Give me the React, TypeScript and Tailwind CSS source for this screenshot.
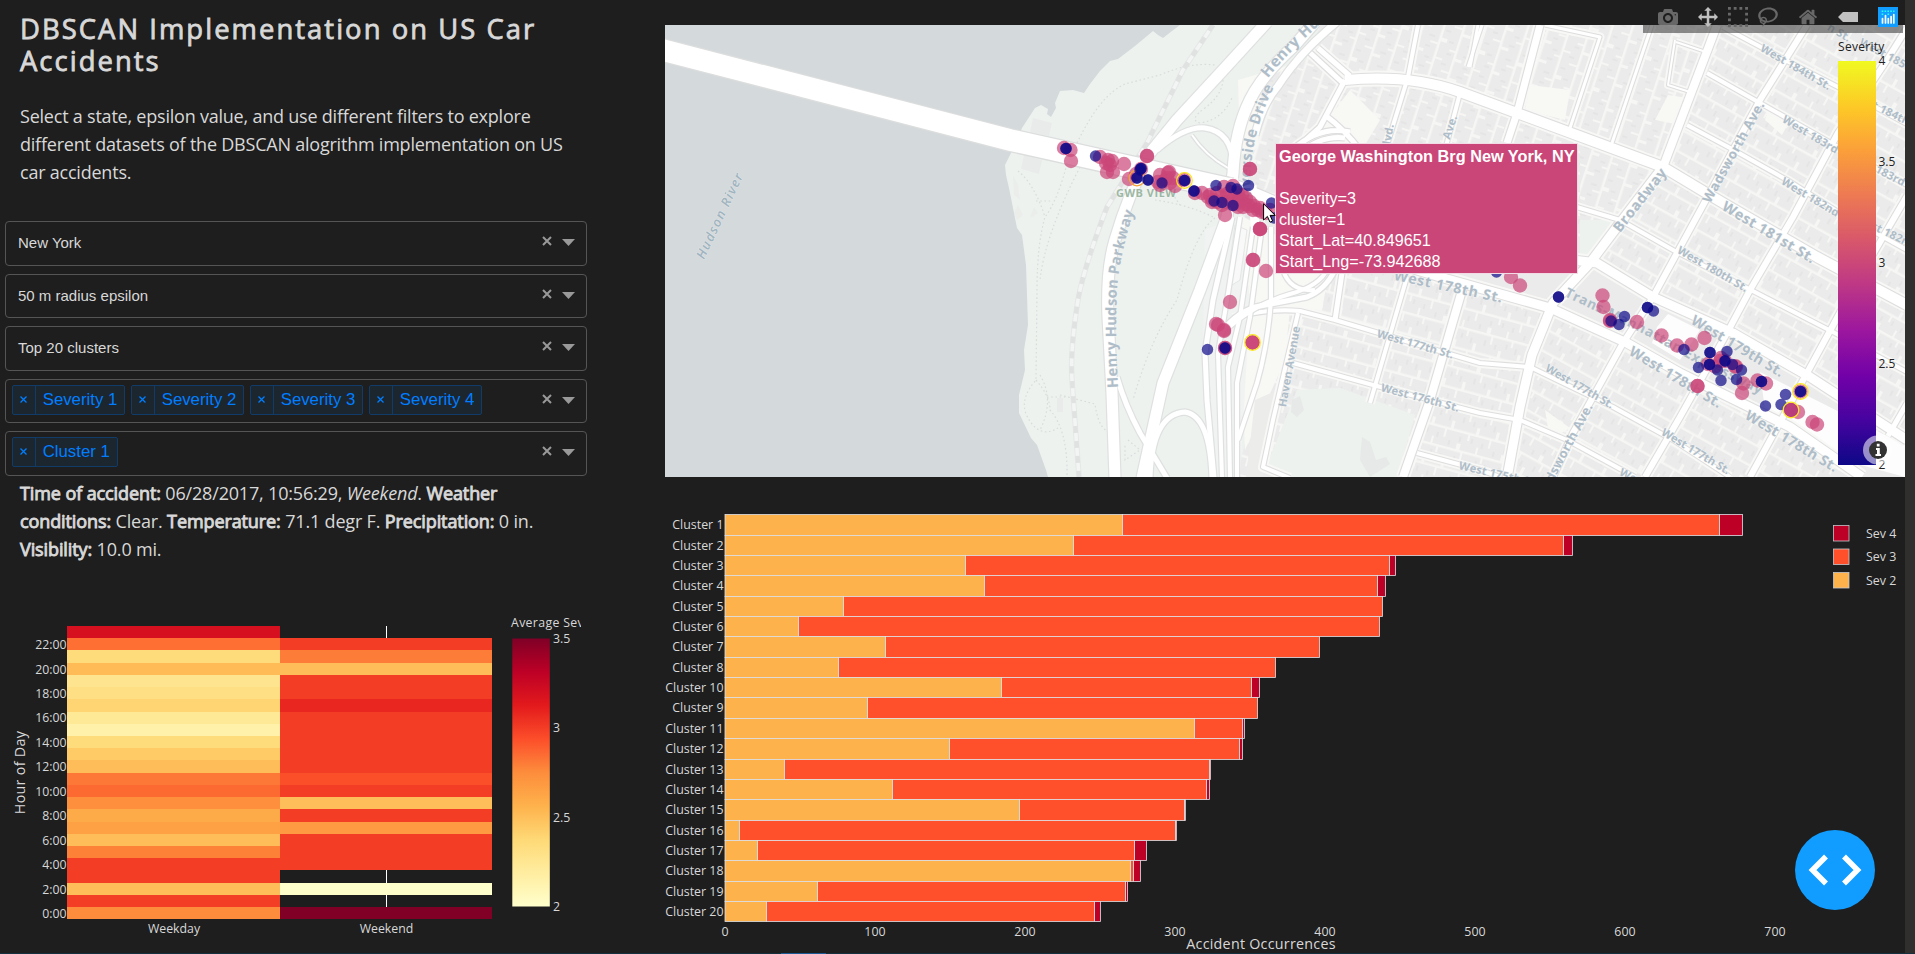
import React from "react";

const CLEAN = "font-['Open_Sans','Noto_Sans',sans-serif]";

/* ---------- controls ---------- */

function Indicators() {
  return (
    <div className="ml-auto flex items-start gap-[10px] pt-[14px] pr-[11px]">
      <svg className="h-[10px] w-[10px]" viewBox="0 0 10 10">
        <path d="M1 1L9 9M9 1L1 9" stroke="#999" strokeWidth="2" />
      </svg>
      <svg className="mt-[3px] h-[7px] w-[13px]" viewBox="0 0 13 7">
        <path d="M0 0H13L6.5 7Z" fill="#999" />
      </svg>
    </div>
  );
}

function Select({ value, tags }: { value?: string; tags?: string[] }) {
  return (
    <div className="flex h-[44.5px] w-[582px] rounded-[4px] border border-[#555] font-['Liberation_Sans',Arial,sans-serif]">
      {value && <span className="pl-[12px] text-[15px] leading-[41px] text-[#d8d8d8]">{value}</span>}
      {tags && (
        <div className="flex gap-[6px] pt-[5px] pl-[6px]">
          {tags.map((t) => (
            <div key={t} className="flex h-[30px] items-center rounded-[2px] border border-[#113c69] bg-[#1c262f] text-[16.8px] text-[#007eff]">
              <span className="flex h-[28px] w-[23px] items-center justify-center border-r border-[#113c69] pr-px pb-px">
                <svg className="h-[7px] w-[7px]" viewBox="0 0 7 7">
                  <path d="M.5 .5L6.5 6.5M6.5 .5L.5 6.5" stroke="#007eff" strokeWidth="1.3" />
                </svg>
              </span>
              <span className="px-[6.7px]">{t}</span>
            </div>
          ))}
        </div>
      )}
      <Indicators />
    </div>
  );
}

/* ---------- heatmap ---------- */

const R = "#f43d25";
const WEEKDAY = ["#fd8d3c", R, "#febd58", R, R, "#fd8238", "#febd58", "#fda144", "#fdab49", "#fd8f3d", "#fd6a31", "#fd7836", "#febd59", "#fecb66", "#fedb7b", "#fff0aa", "#fee997", "#fed572", "#fedf84", "#fee48f", "#febb56", "#fedb7b", "#fd6f33", "#d6101f"];
const WEEKEND = ["#800026", "", "#ffffcc", "", R, R, R, "#fd9a42", R, "#febf5a", R, "#fb4f2a", R, R, R, R, R, "#e92720", R, R, "#febd58", "#fd7c37", R, ""];
const YLORRD = ["#ffffcc", "#ffeda0", "#fed976", "#feb24c", "#fd8d3c", "#fc4e2a", "#e31a1c", "#bd0026", "#800026"];
const PLASMA = ["#0d0887", "#46039f", "#7201a8", "#9c179e", "#bd3786", "#d8576b", "#ed7953", "#fb9f3a", "#fdca26", "#f0f921"];

function Ramp({ id, colors }: { id: string; colors: string[] }) {
  return (
    <linearGradient id={id} x1="0" y1="1" x2="0" y2="0">
      {colors.map((c, i) => (
        <stop key={i} offset={i / (colors.length - 1)} stopColor={c} />
      ))}
    </linearGradient>
  );
}

function Heatmap() {
  const h = 293.3 / 24;
  const y = (i: number) => 919.3 - (i + 1) * h;
  return (
    <svg className={"mt-auto mb-[2px] h-[352px] w-[581px] shrink-0 " + CLEAN} viewBox="0 600 581 352" fontSize="12.3" fill="#d8d8d8">
      <defs>
        <Ramp id="heat" colors={YLORRD} />
      </defs>
      <path d="M386.5 626V919" stroke="#fff" />
      <g shapeRendering="crispEdges">
        {WEEKDAY.map((c, i) => (
          <rect key={i} x="67.4" y={y(i)} width="212.6" height={h} fill={c} />
        ))}
        {WEEKEND.map((c, i) => (c ? <rect key={i} x="280" y={y(i)} width="212.4" height={h} fill={c} /> : null))}
      </g>
      {Array.from({ length: 12 }, (_, k) => (
        <text key={k} x="66.5" y={y(k * 2) + h / 2 + 4.8} textAnchor="end">{`${k * 2}:00`}</text>
      ))}
      <text x="174" y="933" textAnchor="middle">Weekday</text>
      <text x="386.5" y="933" textAnchor="middle">Weekend</text>
      <text transform="translate(25 772.5) rotate(-90)" textAnchor="middle" fontSize="14.3" letterSpacing="0.3">Hour of Day</text>
      <rect x="512.3" y="638.5" width="37.5" height="268" fill="url(#heat)" />
      <text x="511" y="627" letterSpacing="0.35">Average Severity</text>
      <text x="553" y="643">3.5</text>
      <text x="553" y="732">3</text>
      <text x="553" y="822">2.5</text>
      <text x="553" y="911">2</text>
    </svg>
  );
}

/* ---------- stacked bars ---------- */

const BARS: [number, number, number, number][] = [
  [1, 265, 663, 678.5], [2, 232.5, 559, 565], [3, 160.5, 443, 447], [4, 173, 435, 440.5], [5, 79, 438.5, 438.5],
  [6, 49, 436.5, 436.5], [7, 107, 396.5, 396.5], [8, 75.7, 367, 367], [10, 184.5, 351.5, 356.4], [9, 95, 355, 355],
  [11, 313, 345, 346.5], [12, 149.7, 343, 345], [13, 39.7, 323, 324.3], [14, 112, 321, 323.3], [15, 196.6, 306.4, 307],
  [16, 10, 300.5, 301], [17, 21.9, 273, 281], [18, 270.5, 272.5, 277.3], [19, 61.9, 267, 268.6], [20, 28, 246.7, 250.8],
];

function BarChart() {
  const h = 407 / 20;
  return (
    <svg className={"h-[452px] w-[1240px] shrink-0 " + CLEAN} viewBox="665 501 1240 452" fontSize="12.4" fill="#d8d8d8">
      {BARS.map(([n, a, b, c], i) => {
        const y = Math.round(514.3 + i * h) + 0.5;
        const hh = Math.round(514.3 + (i + 1) * h) + 0.5 - y;
        const x = (v: number) => Math.round(725 + v * 1.5) - 0.5;
        return (
          <g key={n}>
            <g stroke="#dfe2e8" strokeWidth="0.8">
              {c > b && <rect x={x(b)} y={y} width={x(c) - x(b)} height={hh} fill="#bd0026" />}
              <rect x={x(a)} y={y} width={x(b) - x(a)} height={hh} fill="#ff4f2b" />
              <rect x="725" y={y} width={x(a) - 725} height={hh} fill="#feb24c" />
            </g>
            <text x="723.5" y={y + h / 2 + 4} textAnchor="end">{`Cluster ${n}`}</text>
          </g>
        );
      })}
      {[0, 100, 200, 300, 400, 500, 600, 700].map((v) => (
        <text key={v} x={725 + v * 1.5} y="935.5" textAnchor="middle">{v}</text>
      ))}
      <text x="1261" y="949" textAnchor="middle" fontSize="14.3" letterSpacing="0.25">Accident Occurrences</text>
      {[["Sev 4", "#bd0026"], ["Sev 3", "#ff4f2b"], ["Sev 2", "#feb24c"]].map(([t, c], i) => (
        <g key={t}>
          <rect x="1833.5" y={525.5 + i * 23.5} width="15.5" height="15.5" fill={c} stroke="#c5c8ce" strokeWidth="0.8" />
          <text x="1866" y={537.7 + i * 23.5}>{t}</text>
        </g>
      ))}
    </svg>
  );
}

/* ---------- map ---------- */

type Road = [string, number];

const STREETS: Road[] = [
  ["M1540 25L1517 113L1507 143", 7], ["M1478 25L1470 67", 3], ["M1545 25L1600 37L1570 128", 3], ["M1652 25L1612 143", 3],
  ["M1717 25L1663 167", 8], ["M1418 25L1408 77L1387 145", 4], ["M1482 25L1468 67", 3], ["M1460 93L1445 150", 4],
  ["M1807 25L1760 100L1713 187L1653 297L1623 343L1573 433L1553 477", 6],
  ["M1907 28L1887 60L1838 133L1793 217L1750 290L1727 333L1680 417L1645 477", 6],
  ["M1907 196L1855 285L1807 373L1750 477", 6], ["M1907 403L1888 436", 5],
  ["M1723 27L1785 60L1838 87L1907 124", 4], ["M1707 73L1760 103L1838 147L1907 185", 4],
  ["M1687 125L1730 148L1787 180L1838 212L1907 250", 4],
  ["M1570 205L1620 220L1673 250L1747 288L1833 332L1907 372", 4],
  ["M1573 260L1597 263L1653 297L1733 333L1810 377L1907 440", 9],
  ["M1300 252L1407 267L1440 277L1550 308L1627 343L1680 373L1790 427L1862 477", 9],
  ["M1233 318Q1268 308 1300 311L1335 320L1480 363L1530 367L1613 407L1673 440L1730 477", 4],
  ["M1293 363L1373 385L1480 413L1520 420L1567 440L1635 477", 4], ["M1417 453L1480 470L1500 477", 4],
  ["M1298 313L1273 420L1263 467L1290 478", 4], ["M1342 273L1335 320", 5], ["M1407 277L1370 403", 4],
  ["M1463 287L1430 400L1403 477", 8],
  ["M1675 40L1668 85L1690 92M1676 42L1706 52L1690 92", 2],
  ["M1305 48L1345 85M1318 48L1350 76", 5],
  ["M1345 80Q1410 74 1460 92L1517 113L1663 167L1713 197L1730 207L1817 257L1907 305", 10],
  ["M1663 167L1617 227L1590 263L1553 303L1532 355L1520 407L1507 478", 9],
  ["M1345 80L1320 127L1300 145M1325 115Q1345 130 1360 150M1292 150Q1320 125 1350 132M1298 155Q1320 135 1345 138", 5],
];

const HIGHWAYS: Road[] = [
  ["M1157 150Q1185 126 1205 128Q1232 132 1233 165", 5], ["M1192 135Q1205 155 1228 168", 2],
  ["M1117 377Q1125 405 1140 433L1167 478", 5], ["M1150 478Q1152 414 1185 412Q1210 416 1212 478", 5],
  ["M1232 217L1213 300L1205 353L1207 400L1214 478", 5], ["M1240 217L1227 300L1218 353L1222 478", 4],
  ["M1253 227L1240 317L1228 367L1230 478", 4], ["M1262 227L1250 317L1237 383V478", 4],
  ["M1271 227V300Q1268 345 1257 383L1238 440", 4],
  ["M1220 335Q1232 315 1255 307L1307 297Q1325 290 1335 270", 5], ["M1228 328Q1255 304 1290 294Q1320 286 1328 268", 4],
  ["M1283 270Q1290 292 1315 290", 4],
  ["M1267 22L1225 68L1177 120L1150 153Q1128 195 1115 240Q1106 270 1108 317L1112 393L1115 478", 11],
  ["M1337 22Q1300 52 1278 86Q1262 105 1255 135", 7],
  ["M1315 22L1295 45Q1262 75 1250 100Q1235 130 1233 173L1227 217L1200 290L1163 383L1142 478", 11],
];

function Roads({ roads }: { roads: Road[] }) {
  return (
    <g fill="none" strokeLinejoin="round">
      {roads.map(([d, w], i) => <path key={i} d={d} stroke="#f8f8f6" strokeWidth={w + 6} />)}
      {roads.map(([d, w], i) => <path key={i} d={d} stroke="#dedede" strokeWidth={w + 2.2} />)}
      {roads.map(([d, w], i) => <path key={i} d={d} stroke="#fff" strokeWidth={w} />)}
    </g>
  );
}

/* label, x, y, angle, size, letter spacing */
const LABELS: [string, number, number, number, number, number][] = [
  ["West 181st St.", 1723, 206, 31, 14.3, 0.5], ["West 180th St.", 1678, 250, 30, 11.2, 0],
  ["West 179th St.", 1692, 320, 31, 14.3, 0.3], ["West 178th St.", 1630, 351, 31, 14.3, 0.3],
  ["West 178th St.", 1746, 415, 31, 14.3, 0.3], ["West 178th St.", 1394, 276, 12, 14.3, 0.7],
  ["West 177th St.", 1546, 368, 30, 11.2, -0.2], ["West 177th St.", 1662, 432, 31, 11.2, -0.1],
  ["West 177th St.", 1377, 334, 16, 11.2, 0], ["West 176th St.", 1381, 388, 15, 11.2, 0.1],
  ["West 175th St.", 1459, 466, 13, 11.2, 0.1], ["West 184th St.", 1761, 48, 30, 11.2, 0],
  ["West 183rd St.", 1783, 119, 31, 11.2, 0.1], ["West 182nd St.", 1782, 181, 31, 11.2, 0.1],
  ["West 185th St.", 1860, 42, 28, 11.2, 0.1],
  ["West 184th St.", 1852, 95, 26, 11.2, 0.1], ["West 183rd St.", 1848, 155, 27, 11.2, 0.1],
  ["West 182nd St.", 1856, 218, 26, 11.2, 0.1], ["h St.", 1828, 27, 30, 11.2, 0.1],
  ["Wes", 1620, 472, 28, 11.2, 0.2],
  ["Broadway", 1617, 231, -52, 14.3, 0.7], ["Wadsworth Ave.", 1707, 202, -61, 13.3, 0.4],
  ["Wadsworth Ave.", 1540, 499, -62, 12.8, 0.2], ["Haven Avenue", 1283, 407, -80, 11.2, 0.1],
  ["Ave.", 1447, 139, -72, 11.2, 0.1], ["Blvd.", 1386, 152, -80, 11.2, 0.1],
];

const PINK: number[][] = [
  [1064, 148], [1070.5, 150], [1071, 161], [1100, 157], [1108, 160], [1112, 161], [1107, 172], [1113, 172], [1110, 165], [1106, 163], [1124, 164],
  [1147, 156], [1147, 156], [1129, 179], [1136, 174], [1141, 169], [1160, 175], [1168, 173], [1165, 180], [1160, 185], [1170, 183], [1175, 186], [1167, 178],
  [1169, 172], [1173, 178], [1158, 182], [1184, 180], [1195, 193], [1202, 193], [1208, 197], [1212, 202], [1217, 193], [1224, 187], [1233, 186], [1217, 202],
  [1213, 200], [1221, 197], [1227, 194], [1233, 198], [1239, 201], [1245, 204], [1249, 206], [1226, 202], [1232, 204], [1238, 207], [1225, 215],
  [1242, 195], [1246, 198], [1250, 202], [1254, 206], [1258, 210], [1262, 212], [1238, 193], [1230, 192], [1222, 205], [1210, 195], [1240, 199], [1236, 204],
  [1253, 210], [1260, 208], [1266, 213], [1270, 210], [1243, 207], [1250, 169], [1250, 169], [1260, 229], [1260, 229], [1260, 229], [1253, 260], [1253, 260], [1266, 271],
  [1230, 302], [1216, 324], [1218, 325], [1224, 331], [1224, 330], [1225, 348], [1225, 348], [1252.5, 342.5], [1252.5, 342.5], [1252.5, 342.5],
  [1511, 277], [1520, 285.5], [1602.5, 295.5], [1603.5, 307], [1610, 321], [1610, 320], [1637, 322], [1661.5, 335.5], [1677, 345.5], [1691.5, 344.5],
  [1704.5, 338], [1697.5, 386], [1697.5, 386], [1721, 358], [1720, 361], [1708, 364], [1715, 366.5], [1725, 361], [1735, 366.5], [1736, 366.5],
  [1743.5, 383.5], [1742, 393], [1757.5, 380.5], [1766, 383.5], [1791, 410], [1791, 410], [1798, 412], [1812.5, 422], [1817, 424.5], [1800.5, 391.5],
];

const NAVY: number[][] = [
  [1066, 148.5], [1066, 148.5], [1095.5, 156], [1141, 168.5], [1141, 168.5], [1140, 170], [1137, 178], [1137, 178], [1148, 180], [1148, 180], [1162, 183],
  [1184.5, 180.5], [1184.5, 180.5], [1194, 191], [1194, 191], [1216, 185.5], [1231, 187.5], [1237, 189], [1248.5, 185.5], [1214, 201], [1222, 202.5],
  [1233, 205.5], [1271.5, 203], [1274, 218], [1207.5, 349.5], [1225, 348], [1225, 348],
  [1496.5, 272], [1558.5, 297], [1558.5, 297], [1611, 321], [1619, 324.5], [1624.5, 316.5], [1647.5, 307.5], [1647.5, 307.5], [1653.5, 311], [1684, 349.5],
  [1710, 352.5], [1710, 352.5], [1727, 351.5], [1698.5, 367.5], [1709.5, 364.5], [1709.5, 364.5], [1717.5, 370], [1721, 380.5], [1725, 361], [1725, 361],
  [1732.5, 364.5], [1741.5, 370], [1736.5, 379.5], [1761.5, 381.5], [1761.5, 381.5], [1765.5, 406], [1785.5, 394.5], [1781, 404.5], [1800.5, 391.5], [1800.5, 391.5],
];

const RINGS = [[1184.5, 180.5], [1252.5, 342.5], [1800.5, 391.5], [1791, 410]];

const YARDS =
  "M0 17H46V19.5H0ZM0 37.5H46V40H0ZM13 0H15V6H13ZM24 10H26V17H24ZM35 0H37V8H35ZM4 11H8V17H4ZM10 19H12V27H10ZM20 31H23V38H20ZM31 19H33V25H31ZM40 30H43V38H40Z";

function MapPanel() {
  return (
    <svg className={"h-[452px] w-[1240px] " + CLEAN} viewBox="665 25 1240 452">
      <defs>
        <Ramp id="severity" colors={PLASMA} />
        {[["b28", 29], ["b15", 15], ["b20", 108]].map(([id, a]) => (
          <pattern key={id} id={String(id)} width="46" height="40" patternUnits="userSpaceOnUse" patternTransform={`rotate(${a})`}>
            <rect width="46" height="40" fill="#ebebeb" />
            <path d={YARDS} fill="#f6f6f4" />
            <path d="M6 4V9M18 3V8M29 5V10M42 10V15M5 24V30M16 26V31M27 23V28M37 25V31" stroke="#e0e0e0" strokeWidth="1" />
          </pattern>
        ))}
        <path id="lblParkway" d="M1118 388Q1115 330 1117 290Q1120 250 1138 200" />
        <path id="lblHenry" d="M1268 78Q1288 52 1325 20" />
        <path id="lblRiver" d="M1251 202Q1249 165 1255 140Q1262 110 1275 85" />
        <path id="lblTrans" d="M1564 296L1640 332L1700 365L1780 404" />
      </defs>
      <rect x="665" y="25" width="1240" height="452" fill="#d4d9dc" />
      <path
        d="M1048 477L1046 470L1037 445L1031 438L1019 413L1019 395L1025 370L1024 350L1028 325L1026 265L1022 235L1017 228L1009 188L1006 175L1005 165L1011 153L1022 128L1035 108L1041 105L1048 109L1047 114L1051 117L1056 108L1055 103L1060 91L1073 90L1084 93L1090 84L1100 71L1110 61L1118 59L1135 46L1153 31L1158 35L1163 38L1172 31L1180 25H1905V477Z"
        fill="#edf2ef"
      />
      <g fill="#e9ebea">
        <path d="M1033 118L1052 123L1049 136L1030 132ZM1024 155L1042 160L1039 174L1021 169ZM1057 398H1063V412H1057Z" />
        <path d="M1013 175L1018 185L1020 200L1014 195ZM1018 205L1023 215L1017 220L1014 213ZM1034 207L1038 213L1030 218Z" opacity=".7" />
      </g>
      <g fill="none" stroke="#d9dcda" strokeWidth="1.2" strokeDasharray="1.6 2.6">
        <path d="M1018 171Q1035 185 1045 217M1068 160Q1058 200 1045 217Q1037 245 1037 290L1036 380Q1020 398 1026 414Q1038 440 1058 428M1036 380Q1050 396 1050 410Q1068 430 1067 477M1036 201H1052M1047 397H1066" />
        <path d="M1077 143Q1100 95 1125 84L1160 75Q1190 62 1215 65M1223 80Q1222 95 1205 108Q1188 120 1200 123Q1222 120 1232 98M1080 167Q1045 235 1040 280" />
        <path d="M1155 200Q1190 205 1215 218Q1195 232 1177 300Q1150 340 1133 400M1060 395L1095 404Q1100 440 1120 430M1128 440L1140 450L1125 460V445M1290 395H1338V420Q1310 400 1297 440L1288 478M1338 420Q1365 450 1366 478M1290 455Q1330 440 1345 478M1265 320V345L1285 365L1280 385" />
        <path d="M1170 190L1180 205M1040 375Q1055 400 1040 430" />
      </g>
      <path d="M1320 25H1905V220H1245L1243 190L1258 120L1280 85L1310 55Z" fill="url(#b20)" />
      <path d="M1242 190L1262 150L1580 150V477H1237L1262 370L1270 270Z" fill="url(#b15)" />
      <path d="M1717 25L1663 167L1590 263L1530 355L1507 477H1905V25Z" fill="url(#b28)" />
      <g fill="#f8f8f5">
        <path d="M1238 80L1300 62L1255 150L1240 155ZM1240 215L1330 265L1322 310L1290 308L1285 360L1245 450L1240 340ZM1320 130L1350 90L1380 120L1365 145H1300ZM1530 85L1570 90L1565 120L1525 110Z" />
        <path d="M1668 95L1688 98L1680 125L1655 120ZM1770 105L1790 120L1782 135L1765 120ZM1545 410L1570 428L1550 440Z" />
      </g>
      <path d="M1205 230L1240 215L1250 300L1240 477H1208L1203 350Z" fill="#f1f3f2" />
      <path d="M1235 225L1247 230L1240 280L1232 285L1228 275Z" fill="#f8f9f8" stroke="#e0e2e1" strokeWidth=".8" />
      <path d="M1262 80L1300 62L1325 90L1305 130L1275 180L1255 200Z" fill="url(#b20)" />
      <path d="M1255 400L1278 390L1262 477H1246Z" fill="#ececeb" />
      <path d="M1297 390L1340 388L1415 415L1397 477H1290L1268 463Z" fill="#edf2ef" />
      <path d="M1362 437L1370 442L1376 460L1386 457L1390 464L1370 477L1360 460ZM1292 400L1300 396L1304 410L1297 417L1291 412Z" fill="#e6e9e7" />
      <path d="M1500 230L1590 268L1650 300L1735 340L1800 378L1890 440L1905 477H1860L1700 383L1627 337L1553 303L1440 273V240Z" fill="#ebebeb" />
      <path d="M1657 327L1668 314L1700 330L1680 360L1652 343ZM1760 372L1905 445V477L1850 462L1765 410Z" fill="#fdfdfd" />
      <g fill="none">
        <path d="M1213 25L1183 70L1147 143L1107 207Q1083 270 1078 300Q1070 350 1072 380L1079 477" stroke="#e6e8e7" strokeWidth="5.5" />
        <path d="M1213 25L1183 70L1147 143L1107 207Q1083 270 1078 300Q1070 350 1072 380L1079 477" stroke="#f3f5f4" strokeWidth="3.5" />
        <path d="M1213 25L1183 70L1147 143L1107 207Q1083 270 1078 300Q1070 350 1072 380L1079 477" stroke="#e0e1e1" strokeWidth="4.5" strokeDasharray="7 8" />
      </g>
      <Roads roads={STREETS} />
      <g fill="none" strokeLinejoin="round">
        {HIGHWAYS.map(([d, w], i) => <path key={i} d={d} stroke="#dfe0e0" strokeWidth={w + 2.4} />)}
        {HIGHWAYS.map(([d, w], i) => <path key={i} d={d} stroke="#fff" strokeWidth={w} />)}
      </g>
      <path d="M655 48L1010 140L1230 189L1290 214L1330 230L1500 240" fill="none" stroke="#dcdddd" strokeWidth="24" />
      <path d="M655 48L1010 140L1230 189L1290 214L1330 230L1500 240" fill="none" stroke="#fff" strokeWidth="21.5" />
      <path d="M1234 178L1231 205M1252 185L1256 235" stroke="#fff" strokeWidth="9" />

      <g fill="#afbdc8" fontWeight="700" stroke="#f4f5f5" strokeWidth="0.9" paintOrder="stroke" strokeLinejoin="round">
        {LABELS.map(([t, x, y, a, s, ls], i) => (
          <text key={i} transform={`translate(${x} ${y}) rotate(${a})`} fontSize={s} letterSpacing={ls} dominantBaseline="middle">{t}</text>
        ))}
        <text fontSize="14.6" letterSpacing="0.4"><textPath href="#lblParkway">Henry Hudson Parkway</textPath></text>
        <text fontSize="15.3" letterSpacing="0.5"><textPath href="#lblHenry">Henry Hudson</textPath></text>
        <text fontSize="14.8" letterSpacing="0.5"><textPath href="#lblRiver">Riverside Drive</textPath></text>
        <text fontSize="13.6" letterSpacing="0.7" stroke="none"><textPath href="#lblTrans">Trans-Manhattan Expressway</textPath></text>
        <text transform="translate(704 260) rotate(-65)" fontSize="13" fontWeight="600" letterSpacing="1.3" fontStyle="italic" fill="#9fb4bf" stroke="#e3e7e9">Hudson River</text>
        <text x="1116" y="197" fontSize="11" letterSpacing="0.5" fill="#9db8a4">GWB VIEW</text>
      </g>

      <g fill="#ca4678" fillOpacity=".7">{PINK.map(([x, y], i) => <circle key={i} cx={x} cy={y} r="7.2" />)}</g>
      <circle cx="1137" cy="178" r="7.8" fill="none" stroke="#f5a13a" strokeWidth="1.3" />
      <g fill="#0d0887" fillOpacity=".7">{NAVY.map(([x, y], i) => <circle key={i} cx={x} cy={y} r="5.7" />)}</g>
      <circle cx="1791" cy="410" r="7.2" fill="#b53a7c" fillOpacity=".8" />
      <g fill="none" stroke="#fbe723" strokeWidth="1.2">{RINGS.map(([x, y], i) => <circle key={i} cx={x} cy={y} r="7.8" />)}</g>

      <rect x="1838" y="61" width="38" height="404" fill="url(#severity)" />
      <g fontSize="12" fill="#222">
        <text x="1838" y="51" letterSpacing="0.3">Severity</text>
        <text x="1878.5" y="65">4</text>
        <text x="1878.5" y="166">3.5</text>
        <text x="1878.5" y="267">3</text>
        <text x="1878.5" y="368">2.5</text>
        <text x="1878.5" y="469">2</text>
      </g>
      <circle cx="1877.5" cy="450" r="14.5" fill="#fff" fillOpacity=".55" />
      <circle cx="1878" cy="450" r="9" fill="#333" />
      <path d="M1876 448H1879.8V454H1881V456H1875.5V454H1877V450H1876ZM1876.8 443.8H1879.6V446.4H1876.8Z" fill="#fff" />
    </svg>
  );
}

/* ---------- chart toolbar ---------- */

const FLIP = "matrix(1 0 0 -1 0 850)";
const TOOLS: { w: number; cls: string; color: string; d: string }[] = [
  { w: 1000, cls: "ml-[15px] w-[20px]", color: "#686868", d: "m500 450c-83 0-150-67-150-150 0-83 67-150 150-150 83 0 150 67 150 150 0 83-67 150-150 150z m400 150h-120c-16 0-34 13-39 29l-31 93c-6 15-23 28-40 28h-340c-16 0-34-13-39-28l-31-94c-6-15-23-28-40-28h-120c-55 0-100-45-100-100v-450c0-55 45-100 100-100h800c55 0 100 45 100 100v450c0 55-45 100-100 100z m-400-550c-138 0-250 112-250 250 0 138 112 250 250 250 138 0 250-112 250-250 0-138-112-250-250-250z m365 380c-19 0-35 16-35 35 0 19 16 35 35 35 19 0 35-16 35-35 0-19-16-35-35-35z" },
  { w: 1000, cls: "ml-[20px] w-[20px]", color: "#c0c0c0", d: "m1000 350l-187 188 0-125-250 0 0 250 125 0-188 187-187-187 125 0 0-250-250 0 0 125-188-188 186-187 0 125 252 0 0-250-125 0 187-188 188 188-125 0 0 250 250 0 0-126 187 188z" },
  { w: 1000, cls: "ml-[10px] w-[20px]", color: "#686868", d: "m0 850l0-143 143 0 0 143-143 0z m286 0l0-143 143 0 0 143-143 0z m285 0l0-143 143 0 0 143-143 0z m286 0l0-143 143 0 0 143-143 0z m-857-286l0-143 143 0 0 143-143 0z m857 0l0-143 143 0 0 143-143 0z m-857-285l0-143 143 0 0 143-143 0z m857 0l0-143 143 0 0 143-143 0z m-857-286l0-143 143 0 0 143-143 0z m286 0l0-143 143 0 0 143-143 0z m285 0l0-143 143 0 0 143-143 0z m286 0l0-143 143 0 0 143-143 0z" },
  { w: 1031, cls: "ml-[10px] w-[20px]", color: "#686868", d: "m1018 538c-36 207-290 336-568 286-277-48-473-256-436-463 10-57 36-108 76-151-13-66 11-137 68-183 34-28 75-41 114-42l-55-70 0 0c-2-1-3-2-4-3-10-14-8-34 5-45 14-11 34-8 45 4 1 1 2 3 2 5l0 0 113 140c16 11 31 24 45 40 4 3 6 7 8 11 48-3 100 0 151 9 278 48 473 255 436 462z m-624-379c-80 14-149 48-197 96 42 42 109 47 156 9 33-26 47-66 41-105z m-187-74c-19 16-33 37-39 60 50-32 109-55 174-68-42-25-95-24-135 8z m360 75c-34-7-69-9-102-8 8 62-16 128-68 170-73 59-175 54-244-5-9 20-16 40-20 61-28 159 121 317 333 354s407-60 434-217c28-159-121-318-333-355z" },
  { w: 928.6, cls: "ml-[20px] w-[20px]", color: "#686868", d: "m786 296v-267q0-15-11-26t-25-10h-214v214h-143v-214h-214q-15 0-25 10t-11 26v267q0 1 0 2t0 2l321 264 321-264q1-1 1-4z m124 39l-34-41q-5-5-12-6h-2q-7 0-12 3l-386 322-386-322q-7-4-13-4-7 2-12 7l-35 41q-4 5-3 13t6 12l401 334q18 15 42 15t43-15l136-114v109q0 8 5 13t13 5h107q8 0 13-5t5-13v-227l122-102q5-5 6-12t-4-13z" },
  { w: 1500, cls: "ml-[20px] w-[20px]", color: "#c0c0c0", d: "m375 725l0 0-375-375 375-374 0-1 1125 0 0 750-1125 0z" },
];

function Toolbar() {
  return (
    <div className="absolute top-0 right-[2px] flex h-[33px] w-[260px] items-start pt-[7px]">
      <div className="absolute top-[25px] left-0 h-[8px] w-full bg-[#444]/60" />
      {TOOLS.map((t, i) => (
        <svg key={i} className={"relative h-[20px] shrink-0 " + t.cls} viewBox={`0 0 ${t.w} 1000`}>
          <path d={t.d} transform={FLIP} fill={t.color} />
        </svg>
      ))}
      <svg className="relative ml-[20px] h-[20px] w-[20px] shrink-0" viewBox="0 0 20 20">
        <rect width="20" height="20" fill="#119dff" />
        <path d="M4.5 11.5V16M7.5 8.5V16M10.3 11.5V16M13.1 9.5V16M15.8 7.5V16" stroke="#fff" strokeWidth="1.7" strokeLinecap="round" />
        <path d="M3.7 4.3H16.5M3.7 7.3H5.3M9.5 7.3H11.1" stroke="#25fefd" strokeWidth="1.6" strokeDasharray="1.6 1.25" />
      </svg>
    </div>
  );
}

const EMPHASIS = "font-normal tracking-[-0.1px] [-webkit-text-stroke:0.9px_#d8d8d8]";

export default function App() {
  return (
    <div className={"relative flex h-[954px] w-[1915px] overflow-hidden bg-[#1e1e1e] text-[#d8d8d8] " + CLEAN}>
      <aside className="flex w-[665px] flex-col">
        <h1 className="mt-[13px] ml-[20px] w-[560px] text-[27.4px] leading-[32px] font-normal tracking-[2.05px] [-webkit-text-stroke:0.8px_#d8d8d8]">
          DBSCAN Implementation on US Car Accidents
        </h1>
        <p className="mt-[25px] ml-[20px] w-[560px] text-[18px] leading-[28px] tracking-[-0.22px]">
          Select a state, epsilon value, and use different filters to explore different datasets of the DBSCAN alogrithm
          implementation on US car accidents.
        </p>
        <div className="mt-[35px] ml-[5px] flex flex-col gap-[8px]">
          <Select value="New York" />
          <Select value="50 m radius epsilon" />
          <Select value="Top 20 clusters" />
          <Select tags={["Severity 1", "Severity 2", "Severity 3", "Severity 4"]} />
          <Select tags={["Cluster 1"]} />
        </div>
        <p className="mt-[3px] ml-[20px] w-[560px] text-[18px] leading-[28px] tracking-[-0.18px]">
          <b className={EMPHASIS}>Time of accident:</b> 06/28/2017, 10:56:29, <i>Weekend</i>. <b className={EMPHASIS}>Weather</b>
          <br />
          <b className={EMPHASIS}>conditions:</b> Clear. <b className={EMPHASIS}>Temperature:</b> 71.1 degr F.{" "}
          <b className={EMPHASIS}>Precipitation:</b> 0 in.
          <br />
          <b className={EMPHASIS}>Visibility:</b> 10.0 mi.
        </p>
        <Heatmap />
      </aside>

      <main className="flex w-[1240px] flex-col">
        <section className="relative h-[501px] pt-[25px]">
          <MapPanel />
          <div className="absolute top-[143px] left-[610px] h-[131px] w-[303px] border border-[#f3dbe5] bg-[#ca4678] pt-[1.5px] pl-[3px] font-['Liberation_Sans',Arial,sans-serif] text-[16.2px] leading-[21.2px] whitespace-nowrap text-white">
            <b className="text-[16.3px]">George Washington Brg New York, NY</b>
            <div className="h-[21px]" />
            <div>Severity=3</div>
            <div>cluster=1</div>
            <div>Start_Lat=40.849651</div>
            <div>Start_Lng=-73.942688</div>
          </div>
          <svg className="absolute top-[203px] left-[598px] h-[20px] w-[13px]" viewBox="0 0 13 20">
            <path d="M.6 .8V17L4.4 13.4L7 19.2L9.6 18L7.1 12.4H12.2Z" fill="#fff" stroke="#000" />
          </svg>
          <Toolbar />
        </section>
        <BarChart />
      </main>

      <div className="w-[10px] bg-[#302f2d]" />

      <div className="absolute bottom-0 left-0 flex h-px w-full bg-[#15303c]">
        <div className="ml-[781px] h-px w-[45px] bg-[#1b5a94]" />
      </div>
      <button className="absolute top-[830px] left-[1795px] flex h-[80px] w-[80px] items-center justify-center rounded-full bg-[#119dff]">
        <svg className="h-[32px] w-[54px]" viewBox="0 0 54 32" fill="none" stroke="#fff" strokeWidth="5.5">
          <path d="M18 2.5L4.5 16L18 29.5M36 2.5L49.5 16L36 29.5" />
        </svg>
      </button>
    </div>
  );
}
